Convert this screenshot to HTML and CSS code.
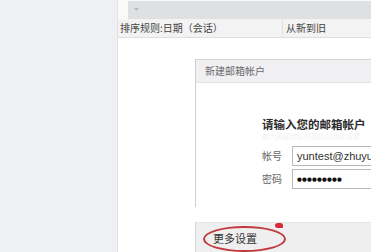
FILE: index.html
```html
<!DOCTYPE html>
<html lang="zh-CN">
<head>
    <meta charset="UTF-8">
    <title>新建邮箱帐户</title>
    <link rel="stylesheet" href="styles.css">
</head>
<body>
    <!-- 左侧导航 -->
    <div class="sidebar"></div>

    <!-- 邮件列表区域 -->
    <div class="main">
        <div class="toolbar">
            <div class="toolbar-bar">
                <svg class="toolbar-arrow" width="5" height="3" viewBox="0 0 5 3"><path d="M0 0 L5 0 L2.5 3 Z" fill="#b9babd"/></svg>
            </div>
        </div>
        <div class="sort-row">
            <div class="sort-rule">排序规则:日期（会话）</div>
            <div class="sort-order">从新到旧</div>
        </div>

        <div class="content">
            <!-- 新建邮箱帐户对话框 -->
            <div class="dialog">
                <div class="dialog-title">新建邮箱帐户</div>
                <div class="dialog-body">
                    <div class="dialog-heading">请输入您的邮箱帐户</div>
                    <div class="dialog-hint">输入邮箱地址和密码以继续设置</div>
                    <div class="field">
                        <span class="field-label">帐号</span>
                        <div class="field-input">yuntest@zhuyun.com</div>
                    </div>
                    <div class="field">
                        <span class="field-label">密码</span>
                        <div class="field-input password">●●●●●●●●●</div>
                    </div>
                </div>
            </div>

            <div class="dialog-footer">
                <span class="more-button">更多设置</span>
                <span class="mark-ellipse"></span>
                <span class="mark-tip"></span>
            </div>
        </div>
    </div>
</body>
</html>
```

FILE: styles.css
```css
body {
    margin: 0;
    width: 371px;
    height: 252px;
    overflow: hidden;
    display: flex;
    font-family: "Noto Sans CJK SC", "Liberation Sans", sans-serif;
    background-color: white;
}

/* 左侧导航 */
.sidebar {
    width: 117px;
    background-color: #eff0f4;
    border-right: 1px solid #e2e3e7;
}

.main {
    flex: 1;
    display: flex;
    flex-direction: column;
    min-width: 0;
}

/* 顶部工具栏 */
.toolbar {
    height: 20px;
    padding: 1px 0 0 10px;
    box-sizing: border-box;
    background-color: #fafafa;
}
.toolbar-bar {
    height: 18px;
    background-color: #dfe0e2;
    padding: 7px 0 0 6px;
    box-sizing: border-box;
}
.toolbar-arrow {
    display: block;
}

/* 排序行 */
.sort-row {
    height: 18px;
    display: flex;
    background-color: #f3f3f3;
    border-bottom: 1px solid #dedede;
    font-size: 10px;
    line-height: 18px;
    color: #444;
}
.sort-rule {
    width: 162px;
    padding-left: 2px;
    border-right: 1px solid #e0e0e0;
}
.sort-order {
    padding-left: 3px;
}

.content {
    flex: 1;
    position: relative;
    padding: 21px 0 0 77px;
}

/* 对话框 */
.dialog {
    border-left: 1px solid #cfcfcf;
    border-top: 1px solid #d3d3d3;
}
.dialog-title {
    height: 22px;
    line-height: 22px;
    padding-left: 9px;
    font-size: 10px;
    color: #6a6a6a;
    background-color: #f0f0f2;
    border-bottom: 1px solid #e3e3e3;
}
.dialog-body {
    height: 124px;
    padding: 33px 0 0 66px;
    box-sizing: border-box;
    background-color: white;
}
.dialog-heading {
    font-size: 11.5px;
    font-weight: bold;
    line-height: 16px;
    color: #2b2b2b;
    white-space: nowrap;
}
.dialog-hint {
    font-size: 7px;
    line-height: 8px;
    color: #f2f2f2;
    white-space: nowrap;
    margin-bottom: 6px;
}
.field {
    display: flex;
    align-items: center;
    height: 19px;
    margin-bottom: 4px;
}
.field-label {
    width: 30px;
    font-size: 10px;
    color: #666;
}
.field-input {
    flex: 1;
    height: 18px;
    line-height: 18px;
    padding-left: 4px;
    border: 1px solid #b8b9bd;
    border-right: none;
    font-family: "Liberation Sans", sans-serif;
    font-size: 11px;
    color: #333;
    white-space: nowrap;
    overflow: hidden;
}
.field-input.password {
    font-family: "DejaVu Sans", sans-serif;
    font-size: 5.5px;
    letter-spacing: 0.2px;
    color: #111;
}

/* 底部按钮栏 */
.dialog-footer {
    position: relative;
    margin-top: 15px;
    height: 30px;
    background-color: #efefef;
    border-top: 1px solid #e4e4e4;
    border-left: 1px solid #d6d6d6;
}
.more-button {
    display: inline-block;
    margin: 8px 0 0 17px;
    font-size: 11px;
    line-height: 14px;
    color: #333;
}
.mark-ellipse {
    position: absolute;
    left: 7px;
    top: 3px;
    width: 79px;
    height: 22px;
    border: 2px solid #c23a40;
    border-radius: 50%;
}
.mark-tip {
    position: absolute;
    left: 79px;
    top: 0;
    width: 8px;
    height: 5px;
    background-color: #d8283a;
    border-radius: 4px 4px 1px 3px;
}
```
